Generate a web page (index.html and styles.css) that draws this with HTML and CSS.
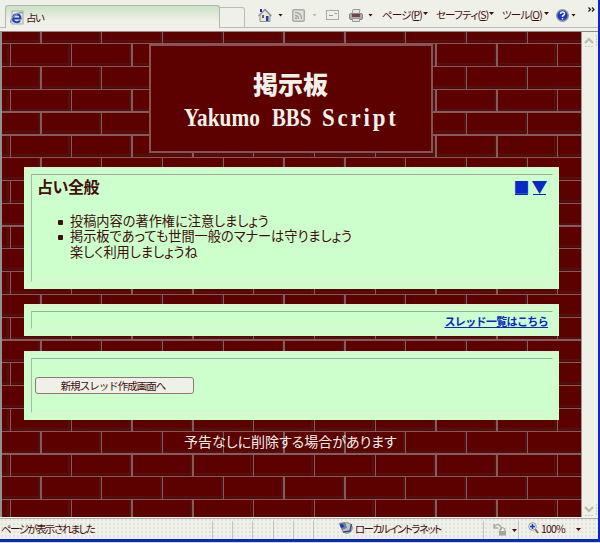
FILE: index.html
```html
<!DOCTYPE html>
<html lang="ja">
<head>
<meta charset="utf-8">
<title>占い</title>
<link rel="stylesheet" href="styles.css">
</head>
<body>
<div class="window">
  <header class="toolbar">
    <div class="tab">
      <svg class="ie" width="14" height="15" viewBox="0 0 14 15"><rect x="2" y="1" width="11" height="13" fill="#e4e6de" stroke="#aaa"/><path d="M3 8.500H10.500C10.500 3 3 3 3 8.500C3 13 8.500 13 10 10.500" fill="none" stroke="#1c3fc4" stroke-width="2"/><path d="M1 13C-1 9 8 1 13 3" fill="none" stroke="#8294a0" stroke-width="1.300"/></svg>
      <span class="tab-name">占い</span>
    </div>
    <div class="newtab"></div>
    <nav class="commands">
      <svg class="ic-home" width="14" height="15" viewBox="0 0 14 15"><path d="M2 7V13.500H12V7L7 2Z" fill="#e5e5df" stroke="#929292"/><path d="M.5 8L7 1.500L13.500 8" fill="none" stroke="#929292" stroke-width="1.500"/><path d="M2 1H4V4H2Z" fill="#0a28d8"/><path d="M8 8H10.500V13H8Z" fill="#203aa8"/><path d="M4 7H6V10H4Z" fill="#825555"/></svg>
      <i class="caret c1"></i>
      <svg class="ic-rss" width="13" height="13" viewBox="0 0 13 13"><rect x=".75" y=".75" width="11.500" height="11.500" rx="1.500" fill="#e2e4dc" stroke="#aaaaa6" stroke-width="1.500"/><path d="M3 3.500Q9.500 3.500 9.500 10M3 6.500Q6.500 6.500 6.500 10" fill="none" stroke="#a3a3a0" stroke-width="1.300"/><circle cx="4" cy="9.200" r="1" fill="#999"/></svg>
      <i class="caret faint c2"></i>
      <svg class="ic-mail" width="13" height="10" viewBox="0 0 13 10"><rect x=".5" y=".5" width="12" height="9" fill="#eff0e8" stroke="#a9a9a5"/><path d="M8.500 3.500H11M3 5.500H7" stroke="#999"/></svg>
      <svg class="ic-print" width="14" height="13" viewBox="0 0 14 13"><path d="M4 .5H11L10 5H3Z" fill="#e6e6e0" stroke="#999"/><rect x=".5" y="4.500" width="13" height="6" rx="1.500" fill="#aaa" stroke="#888"/><path d="M3 5H11V8H3Z" fill="#744"/><path d="M3.500 9.500H10.500V12.500H3.500Z" fill="#e2e2dc" stroke="#999"/></svg>
      <i class="caret c3"></i>
      <span class="cmd m1">ページ(<u>P</u>)</span><i class="caret c4"></i>
      <span class="cmd m2">セーフティ(<u>S</u>)</span><i class="caret c4"></i>
      <span class="cmd m3">ツール(<u>O</u>)</span><i class="caret c4"></i>
      <svg class="ic-help" width="13" height="13" viewBox="0 0 13 13"><circle cx="6.500" cy="6.500" r="5.800" fill="#1438cc" stroke="#999" stroke-width="1.400"/><path d="M4.500 5Q4.500 3 6.500 3Q8.800 3 8.500 5Q8.300 6 6.500 7V8M6.500 9V10.500" stroke="#f3f3ee" stroke-width="1.500" fill="none"/></svg>
      <i class="caret c5"></i>
      <svg class="more" width="7" height="5" viewBox="0 0 7 5"><path d="M.5 .5L2.500 2.500L.5 4.500M4 .5L6 2.500L4 4.500" fill="none" stroke="#301010" stroke-width="1.200"/></svg>
    </nav>
  </header>
  <div class="middle">
    <main class="page">
      <svg class="bricks" width="579" height="485" viewBox="2 32 579 485" shape-rendering="crispEdges">
        <g class="shade" stroke-dasharray="2 20.8"><path d="M291 40.200V520" stroke-width="580"/></g>
        <g class="shade" stroke-width="2" stroke-dasharray="22.8 22.8">
          <path d="M38.500 20.900V520M99.500 20.900V520M160.500 20.900V520M221.500 20.900V520M282 20.900V520M343 20.900V520M403.500 20.900V520M464.500 20.900V520M525.500 20.900V520"/>
          <path d="M8 43.700V520M68.500 43.700V520M129.500 43.700V520M190.500 43.700V520M251 43.700V520M312 43.700V520M373 43.700V520M433.500 43.700V520M494.500 43.700V520M555 43.700V520"/>
        </g>
        <path class="mortar" d="M291 43V520" stroke-width="580" stroke-dasharray="1.3 21.500"/>
        <g class="mortar" stroke-width="1.300" stroke-dasharray="22.8 22.8">
          <path d="M40.900 20.900V520M101.700 20.900V520M162.500 20.900V520M223.300 20.900V520M284.100 20.900V520M344.900 20.900V520M405.700 20.900V520M466.500 20.900V520M527.300 20.900V520"/>
          <path d="M10.500 43.700V520M71.300 43.700V520M132.100 43.700V520M192.900 43.700V520M253.700 43.700V520M314.500 43.700V520M375.300 43.700V520M436.100 43.700V520M496.900 43.700V520M557.700 43.700V520"/>
        </g>
      </svg>
      <div class="content">
        <h1 class="banner"><span class="kanji">掲示板</span><span class="latin"><b class="w1">Yakumo</b><b class="w2">BBS</b><b class="w3">Script</b></span></h1>
        <section class="card rules">
          <div class="inner">
            <div class="heading"><h2>占い全般</h2><div class="jump"><a>■</a><a>▼</a></div></div>
            <ul>
              <li>投稿内容の著作権に注意しましょう</li>
              <li>掲示板であっても世間一般のマナーは守りましょう<br>楽しく利用しましょうね</li>
            </ul>
          </div>
        </section>
        <section class="card list"><div class="inner"><a>スレッド一覧はこちら</a></div></section>
        <section class="card create"><div class="inner"><button>新規スレッド作成画面へ</button></div></section>
        <p class="notice">予告なしに削除する場合があります</p>
      </div>
    </main>
    <aside class="scrollbar">
      <svg width="15" height="18" viewBox="0 0 15 18"><path d="M3 11L7 7L11 11" fill="none" stroke="#b5bdb0" stroke-width="2.200"/><path d="M14.500 3V14M3 14.500H12" stroke="#c8cfc5" stroke-dasharray="2 1"/></svg>
      <svg width="15" height="16" viewBox="0 0 15 16"><path d="M3 6L7 10L11 6" fill="none" stroke="#b5bdb0" stroke-width="2.200"/><path d="M14.500 3V14M3 14.500H12" stroke="#c8cfc5" stroke-dasharray="2 1"/></svg>
    </aside>
  </div>
  <footer class="status">
    <span class="done">ページが表示されました</span>
    <div class="slots"><i></i><i></i><i></i><i></i><i></i><i></i></div>
    <div class="zone">
      <svg width="15" height="14" viewBox="0 0 15 14"><circle cx="9" cy="7" r="5.300" fill="#bdc8bb" stroke="#8a8a8a"/><path d="M1 2L7 1L9 7L4 9Z" fill="#777d90"/><path d="M1.500 3.500L5 3L6 6L3 7Z" fill="#1438cc"/><path d="M5 11L12 10L13.500 3" fill="none" stroke="#39499a" stroke-width="1.500"/></svg>
      <span>ローカル イントラネット</span>
    </div>
    <div class="protect">
      <svg width="14" height="13" viewBox="0 0 14 13"><path d="M1 4Q5-1 8 4V7M1 1V5H5" fill="none" stroke="#aaa" stroke-width="1.500"/><path d="M7 8V6Q9.500 3 12 6V8" fill="none" stroke="#999"/><path d="M6 8H13V12.500H6Z" fill="#a5a5a0"/></svg><i class="caret"></i>
    </div>
    <div class="zoom">
      <svg width="11" height="12" viewBox="0 0 11 12"><path d="M7 7L10 11" stroke="#926060" stroke-width="2"/><circle cx="4.500" cy="4.500" r="3.800" fill="#e8ece8" stroke="#999"/><path d="M4.500 2V7M2 4.500H7" stroke="#1438cc" stroke-width="1.500"/></svg>
      <span>100%</span><i class="caret"></i>
    </div>
  </footer>
</div>
</body>
</html>
```
FILE: styles.css
```css
* { box-sizing: border-box; }
body { margin: 0; width: 600px; height: 543px; overflow: hidden; background: #d8dad6; color: #420c0c; font-family: "Liberation Sans", "Noto Sans CJK JP", sans-serif; }
svg { display: block; flex: none; }
.window { width: 600px; height: 542px; display: flex; flex-direction: column; border-right: 2px solid #0828c8; border-bottom: 3px solid #0828c8; background: #eff0e8; }
.toolbar { height: 32px; display: flex; border-bottom: 1px solid #8c8c88; padding: 5px 0 0 0; background: linear-gradient(#b6bcb4, #b6bcb4) 0 27px / 100% 1px no-repeat; }
.tab { width: 215px; height: 23px; margin-left: 5px; padding: 4px 0 0 4px; display: flex; border: 1px solid #b0b7ae; border-bottom: 0; border-radius: 3px 3px 0 0; background: linear-gradient(#c9e3c5, #eff0e8 70%); }
.tab-name { margin: 0 0 0 2px; font: 10.5px/15px "Noto Sans CJK JP", sans-serif; letter-spacing: -1.8px; }
.newtab { width: 25px; height: 21px; margin-top: 2px; border: 1px solid #b7bdb5; border-left: 0; border-radius: 0 3px 0 0; }
.commands { display: flex; align-items: center; height: 20px; margin-left: 13px; width: 340px; flex: none; }
.caret { flex: none; width: 5px; height: 3px; background: #420c0c; clip-path: polygon(0 0, 100% 0, 50% 100%); }
.faint { background: #b5bdb0; }
.c1 { margin: 0 9px 0 6px; }
.c2 { margin: 0 9px 0 7px; }
.ic-print { margin-left: 10px; }
.c3 { margin: 0 9px 0 5px; }
.c4 { margin-top: -3px; }
.cmd { flex: none; font: 10.5px/18px "Noto Sans CJK JP", sans-serif; font-feature-settings: "palt"; white-space: nowrap; }
.m1 { width: 41px; letter-spacing: -.8px; }
.m2 { width: 53px; margin-left: 8px; letter-spacing: -.8px; }
.m3 { width: 42px; margin-left: 8px; letter-spacing: -.8px; }
.ic-help { margin-left: 7px; }
.c5 { margin-left: 2px; }
.more { margin: -11px 0 0 12px; }
.middle { display: flex; height: 485px; border-left: 2px solid #92928e; }
.page { display: grid; width: 580px; height: 485px; background: #5c0000; overflow: hidden; border-right: 1px solid #999995; }
.bricks, .content { grid-area: 1 / 1; min-width: 0; }
.content { position: relative; padding: 12px 24px 0 22px; }
.mortar { stroke: #875b59; fill: none; }
.shade { stroke: #4f1111; fill: none; }
.banner { width: 284px; height: 109px; margin: 0 0 14px 125px; padding: 21px 0 0; border: 2px solid #865553; background: #5c0000; color: #f1f1ea; display: flex; flex-direction: column; align-items: center; }
.kanji { font: 900 25px/32px "Noto Sans CJK JP", sans-serif; margin-right: 1px; }
.latin { display: flex; width: 213px; height: 35px; margin-right: 2px; font: bold 26px/37px "Liberation Serif", serif; }
.latin b { display: block; flex: none; transform-origin: 0 50%; white-space: nowrap; }
.w1 { width: 88px; transform: scaleX(.82); }
.w2 { width: 50px; transform: scaleX(.8); }
.w3 { letter-spacing: 3.2px; transform: scaleX(.88); }
.card { width: 535px; padding: 6px 6px 7px 7px; background: #ccffcc; border-top: 1px solid #e0eddc; }
.inner { height: 100%; border: 1px solid #e6efe0; border-top-color: #9fa89f; border-left-color: #adb6ad; }
.rules { height: 122px; margin-bottom: 15px; }
.heading { display: flex; justify-content: space-between; height: 26px; padding: 0 6px 0 5px; }
h2 { margin: 0; font: bold 16px/23px "Noto Sans CJK JP", sans-serif; letter-spacing: -.5px; }
.jump { display: flex; gap: 5px; font: 16px/18px "Noto Sans CJK JP", sans-serif; color: #0828c8; padding-top: 4px; }
.jump a { display: block; width: 13px; height: 16px; line-height: 14px; letter-spacing: -3px; text-indent: -1.5px; border-bottom: 1px solid #0828c8; }
ul { list-style: none; margin: 12px 0 0; padding: 0 0 0 38px; font: 13.2px/15.3px "Noto Sans CJK JP", sans-serif; font-feature-settings: "palt"; white-space: nowrap; }
li::before { content: ""; float: left; width: 5px; height: 5px; margin: 7px 0 0 -12px; background: #420c0c; border-radius: 1px; }
.list { height: 32px; margin-bottom: 15px; text-align: right; }
.list .inner { padding-right: 4px; }
.list a { display: inline-block; font: bold 11px/15px "Noto Sans CJK JP", sans-serif; color: #0828c8; text-decoration: underline; letter-spacing: -.65px; }
.create { height: 69px; }
button { display: block; width: 159px; height: 17px; margin: 18px 0 0 3px; padding: 0 3px 0 0; border: 1.5px solid #927777; border-radius: 3px; background: #eff0e8; color: #420c0c; font: 10.5px/13px "Noto Sans CJK JP", sans-serif; letter-spacing: -1px; }
.notice { margin: 10px 0 0; padding-left: 160px; font: 14px/22px "Noto Sans CJK JP", sans-serif; font-feature-settings: "palt"; color: #f1f1ea; white-space: nowrap; }
.scrollbar { width: 16px; display: flex; flex-direction: column; justify-content: space-between; background: #eff0e8; }
.status { display: flex; height: 22px; align-items: stretch; padding-top: 3px; border-top: 1px solid #f7f8f2; box-shadow: inset 0 1px #a5aaa3; background: radial-gradient(#cdd3ca .6px, transparent .8px) 0 0 / 4px 4px, #eff0e8; font: 10.5px/15px "Noto Sans CJK JP", sans-serif; font-feature-settings: "palt"; white-space: nowrap; }
.status .caret { margin-top: 7px; }
.done { width: 212px; padding-left: 1px; letter-spacing: -1.6px; }
.slots { display: flex; width: 121px; flex: none; }
.slots i { width: 20.200px; border-left: 1px solid #c0c7bd; }
.zone { display: flex; width: 150px; padding: 0 0 0 5px; gap: 2px; letter-spacing: -1.6px; }
.protect { display: flex; width: 35px; padding: 2px 0 0 9px; gap: 5px; border-left: 1px solid #c0c7bd; }
.protect .caret { margin-top: 6px; }
.zoom { display: flex; padding-left: 9px; border-left: 1px solid #c0c7bd; gap: 2px; letter-spacing: -.8px; }
.zoom svg { margin-top: 1px; }
.zoom .caret { margin-left: 9px; }
```
